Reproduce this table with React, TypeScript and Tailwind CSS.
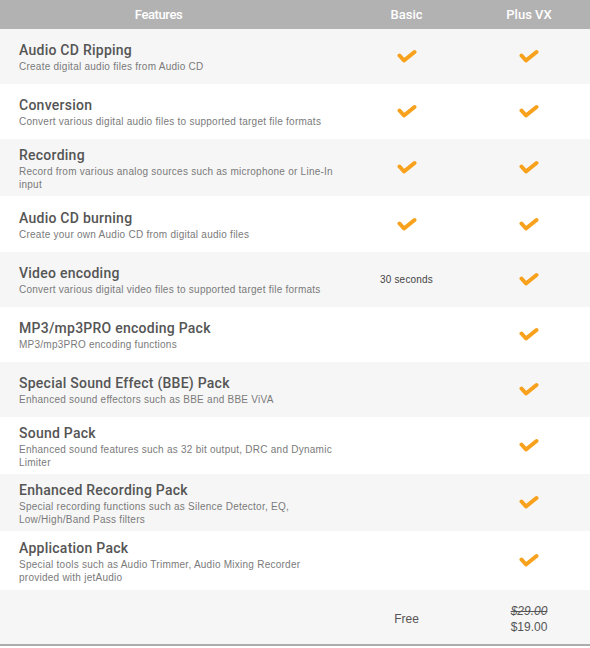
const rows = [
  { title: "Audio CD Ripping", desc: ["Create digital audio files from Audio CD"], basic: true, h: "h-[55px]" },
  { title: "Conversion", desc: ["Convert various digital audio files to supported target file formats"], basic: true, h: "h-[55px]" },
  { title: "Recording", desc: ["Record from various analog sources such as microphone or Line-In", "input"], basic: true, h: "h-[57px]" },
  { title: "Audio CD burning", desc: ["Create your own Audio CD from digital audio files"], basic: true, h: "h-[56px]" },
  { title: "Video encoding", desc: ["Convert various digital video files to supported target file formats"], basic: "30 seconds", h: "h-[55px]" },
  { title: "MP3/mp3PRO encoding Pack", desc: ["MP3/mp3PRO encoding functions"], basic: false, h: "h-[55px]" },
  { title: "Special Sound Effect (BBE) Pack", desc: ["Enhanced sound effectors such as BBE and BBE ViVA"], basic: false, h: "h-[55px]" },
  { title: "Sound Pack", desc: ["Enhanced sound features such as 32 bit output, DRC and Dynamic", "Limiter"], basic: false, h: "h-[57px]" },
  { title: "Enhanced Recording Pack", desc: ["Special recording functions such as Silence Detector, EQ,", "Low/High/Band Pass filters"], basic: false, h: "h-[57px]" },
  { title: "Application Pack", desc: ["Special tools such as Audio Trimmer, Audio Mixing Recorder", "provided with jetAudio"], basic: false, h: "h-[59px]" },
];

function Check() {
  return (
    <svg width="20" height="15" viewBox="0 0 20 15" className="block">
      <polyline
        points="2.5,6.5 7,11.5 17.5,3"
        fill="none"
        stroke="#f7a11c"
        strokeWidth="4"
        strokeLinecap="round"
        strokeLinejoin="round"
      />
    </svg>
  );
}

export default function App() {
  return (
    <div className="w-[590px] h-[648px] bg-white font-['Roboto',sans-serif] overflow-hidden">
      {/* Header */}
      <div className="grid grid-cols-[345px_123px_122px] h-[29px] items-center bg-[#b2b2b2] text-white text-[13px] font-medium">
        <div className="text-center pr-[28px] tracking-[-0.4px]">Features</div>
        <div className="text-center">Basic</div>
        <div className="text-center">Plus VX</div>
      </div>

      {/* Feature rows */}
      {rows.map((row, i) => (
        <div
          key={i}
          className={`grid grid-cols-[345px_123px_122px] items-center ${row.h} ${i % 2 === 0 ? "bg-[#f6f6f6]" : "bg-white"}`}
        >
          <div className="pl-[19px] pt-[2px]">
            <div className="text-[14px] leading-[17px] font-medium text-[#555555] tracking-[0.25px]">{row.title}</div>
            <div className="text-[10px] leading-[13px] text-[#7a7a7a] font-['Liberation_Sans',sans-serif] tracking-[0.25px] whitespace-nowrap mt-[1px]">
              {row.desc.map((d, j) => (
                <div key={j}>{d}</div>
              ))}
            </div>
          </div>
          <div className="flex justify-center">
            {row.basic === true ? (
              <Check />
            ) : typeof row.basic === "string" ? (
              <span className="text-[10px] text-[#444444] font-['Liberation_Sans',sans-serif] tracking-[0.2px]">{row.basic}</span>
            ) : null}
          </div>
          <div className="flex justify-center">
            <Check />
          </div>
        </div>
      ))}

      {/* Price row */}
      <div className="grid grid-cols-[345px_123px_122px] items-center h-[56px] pt-[4px] bg-[#f6f6f6] font-['Liberation_Sans',sans-serif] text-[12px] text-[#555555] border-b-[2px] border-[#adadad]">
        <div />
        <div className="text-center">Free</div>
        <div className="text-center leading-[16px]">
          <div className="italic line-through">$29.00</div>
          <div>$19.00</div>
        </div>
      </div>
    </div>
  );
}
